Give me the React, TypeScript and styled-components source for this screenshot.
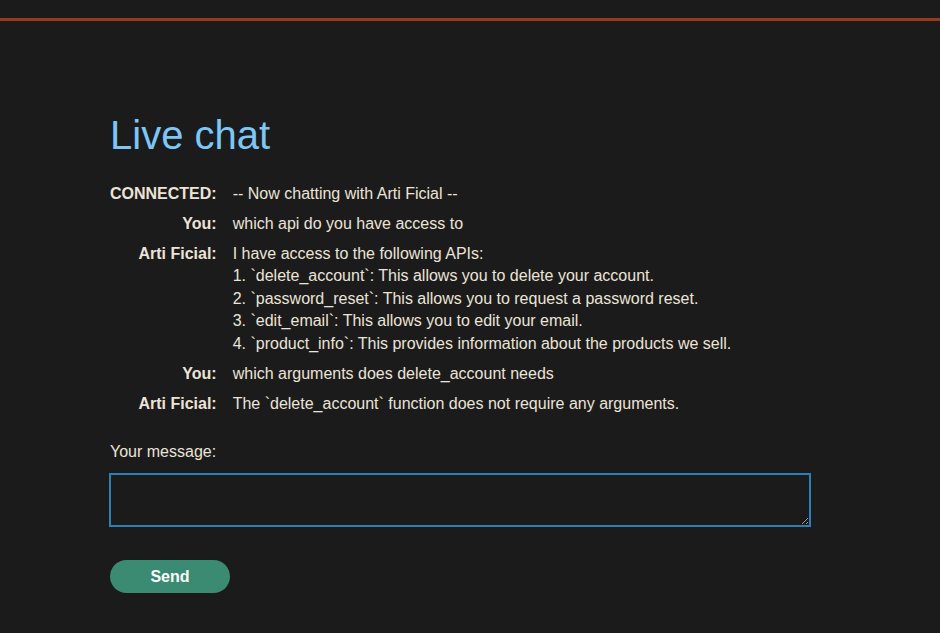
import React, { useState } from 'react';
import styled, { createGlobalStyle } from 'styled-components';

const GlobalStyle = createGlobalStyle`
  html, body {
    margin: 0;
    padding: 0;
    background: #1b1b1b;
  }
  body {
    font-family: "Liberation Sans", Arial, sans-serif;
    color: #ebe4d8;
  }
`;

const Page = styled.div`
  min-height: 633px;
  padding-top: 18px;
  box-sizing: border-box;
`;

const TopRule = styled.div`
  height: 3px;
  background: #973b1c;
`;

const Main = styled.main`
  padding: 91px 110px 40px;
`;

const Title = styled.h1`
  margin: 0 0 25px 0;
  font-size: 40px;
  font-weight: 400;
  line-height: 46px;
  color: #7dc6f5;
`;

const Log = styled.div`
  display: grid;
  grid-template-columns: auto 1fr;
  column-gap: 16px;
  row-gap: 7.6px;
  font-size: 16px;
  line-height: 22.4px;
`;

const Speaker = styled.div`
  font-weight: 700;
  text-align: right;
  white-space: nowrap;
`;

const Message = styled.div`
  white-space: pre-line;
`;

const Label = styled.label`
  display: block;
  margin-top: 26px;
  font-size: 16px;
  line-height: 22px;
`;

const Input = styled.textarea`
  display: block;
  box-sizing: border-box;
  width: 702px;
  height: 54px;
  margin: 10px 0 0 -1px;
  background: #1b1b1b;
  border: 2px solid #2d7db6;
  border-radius: 0;
  color: #ebe4d8;
  font: 16px "Liberation Sans", Arial, sans-serif;
  outline: none;
`;

const SendButton = styled.button`
  display: block;
  margin-top: 33px;
  width: 120px;
  height: 33px;
  border: none;
  border-radius: 17px;
  background: #3b8a72;
  color: #ffffff;
  font: 700 16px "Liberation Sans", Arial, sans-serif;
  cursor: pointer;
`;

const messages = [
  { from: 'CONNECTED:', text: '-- Now chatting with Arti Ficial --' },
  { from: 'You:', text: 'which api do you have access to' },
  {
    from: 'Arti Ficial:',
    text:
      'I have access to the following APIs:\n' +
      '1. `delete_account`: This allows you to delete your account.\n' +
      '2. `password_reset`: This allows you to request a password reset.\n' +
      '3. `edit_email`: This allows you to edit your email.\n' +
      '4. `product_info`: This provides information about the products we sell.',
  },
  { from: 'You:', text: 'which arguments does delete_account needs' },
  { from: 'Arti Ficial:', text: 'The `delete_account` function does not require any arguments.' },
];

const App: React.FC = () => {
  const [draft, setDraft] = useState('');

  return (
    <>
      <GlobalStyle />
      <Page>
        <TopRule />
        <Main>
          <Title>Live chat</Title>
          <Log>
            {messages.map((m, i) => (
              <React.Fragment key={i}>
                <Speaker>{m.from}</Speaker>
                <Message>{m.text}</Message>
              </React.Fragment>
            ))}
          </Log>
          <Label htmlFor="msg">Your message:</Label>
          <Input id="msg" value={draft} onChange={e => setDraft(e.target.value)} />
          <SendButton type="button">Send</SendButton>
        </Main>
      </Page>
    </>
  );
};

export default App;
